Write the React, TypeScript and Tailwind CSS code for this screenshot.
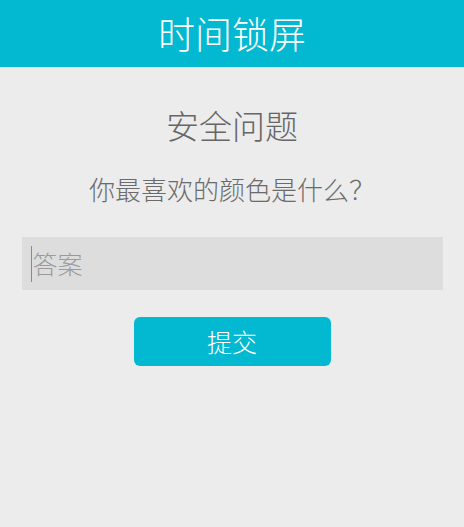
export default function App() {
  const font = { fontFamily: '"Noto Sans CJK SC", "Noto Sans", sans-serif' }

  return (
    <div className="min-h-[527px] w-full bg-[#ececec]" style={font}>
      <header className="flex h-[67px] items-center justify-center bg-[#02b9d1]">
        <h1 className="text-[37px] font-light leading-none text-white">时间锁屏</h1>
      </header>

      <main className="flex flex-col items-center">
        <h2 className="mt-[42px] text-[33px] font-light leading-none text-[#666666]">安全问题</h2>
        <p className="mt-[34px] text-[26px] font-light leading-none text-[#6b6b6b]">你最喜欢的颜色是什么？</p>

        <div className="mt-[35px] flex h-[53px] w-[421px] items-center bg-[#dddddd] pl-[9px]">
          <span className="h-[36px] w-px bg-[#8a8a8a]" />
          <span className="ml-px text-[25px] font-light leading-none text-[#9a9a9a]">答案</span>
        </div>

        <button className="mt-[27px] flex h-[49px] w-[197px] items-center justify-center rounded-[6px] bg-[#02b9d1] text-[25px] font-light leading-none text-white">
          提交
        </button>
      </main>
    </div>
  )
}
